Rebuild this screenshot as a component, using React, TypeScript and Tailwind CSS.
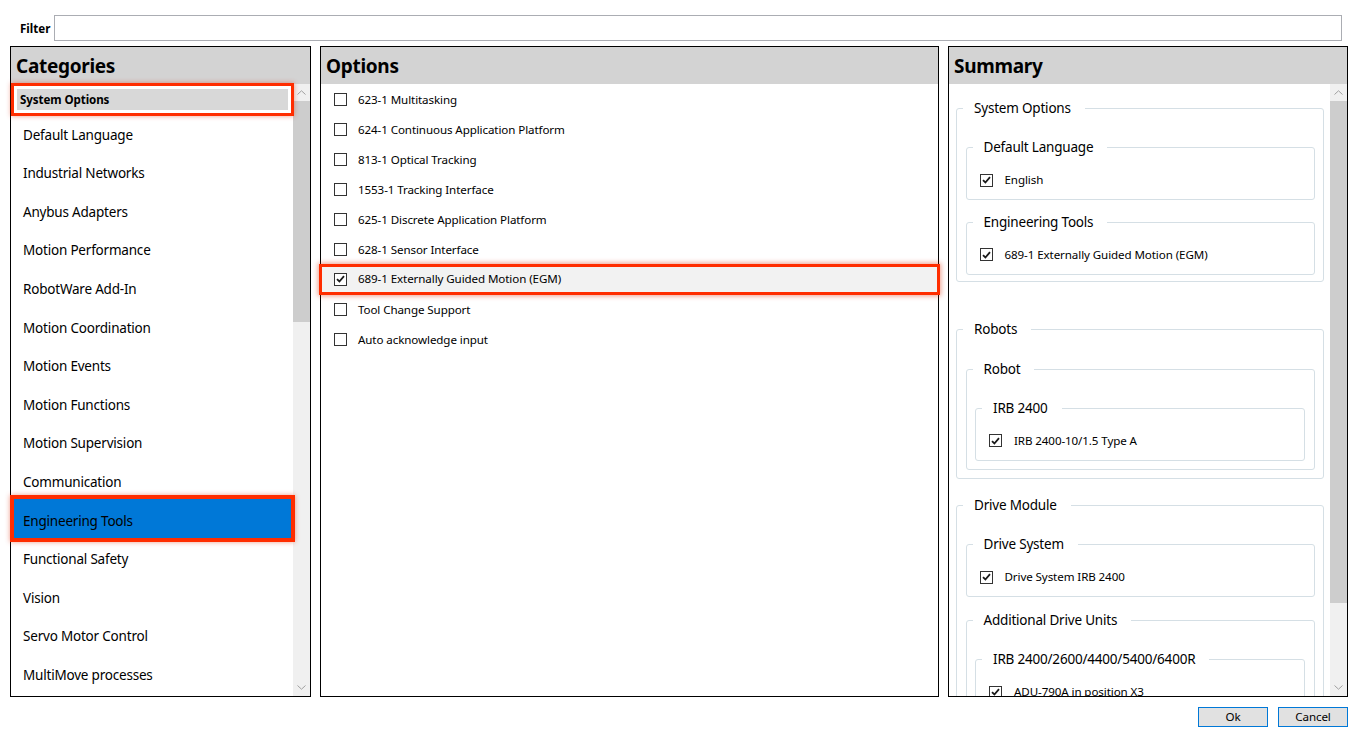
const categories = [
  "Default Language",
  "Industrial Networks",
  "Anybus Adapters",
  "Motion Performance",
  "RobotWare Add-In",
  "Motion Coordination",
  "Motion Events",
  "Motion Functions",
  "Motion Supervision",
  "Communication",
  "Engineering Tools",
  "Functional Safety",
  "Vision",
  "Servo Motor Control",
  "MultiMove processes",
];

const options = [
  { label: "623-1 Multitasking", on: false },
  { label: "624-1 Continuous Application Platform", on: false },
  { label: "813-1 Optical Tracking", on: false },
  { label: "1553-1 Tracking Interface", on: false },
  { label: "625-1 Discrete Application Platform", on: false },
  { label: "628-1 Sensor Interface", on: false },
  { label: "689-1 Externally Guided Motion (EGM)", on: true },
  { label: "Tool Change Support", on: false },
  { label: "Auto acknowledge input", on: false },
];

const redFrame =
  "relative shadow-[0_0_0_4px_#ff2d00,0_0_5px_4px_rgba(220,40,0,0.45)]";

// small / normal text, sized to the width of the original Segoe UI
const small = "text-[11.6px] tracking-[-0.1px]";
const normal = "text-[13.5px] tracking-[-0.2px]";

function Check({ on }: { on?: boolean }) {
  return (
    <span className="w-[13px] h-[13px] border border-[#333333] bg-white flex items-center justify-center shrink-0">
      {on && (
        <svg width="9" height="8" viewBox="0 0 9 8">
          <path d="M1 4.2 L3.4 6.5 L8 1.2" stroke="#1a1a1a" strokeWidth="1.8" fill="none" />
        </svg>
      )}
    </span>
  );
}

function ScrollBar({ thumb }: { thumb: number }) {
  return (
    <div className="w-[17px] bg-[#f0f0f0] flex flex-col shrink-0">
      <div className="h-[17px] flex items-center justify-center">
        <svg width="9" height="5" viewBox="0 0 9 5">
          <path d="M0.5 4.5 L4.5 0.8 L8.5 4.5" stroke="#a0a0a0" strokeWidth="1" fill="none" />
        </svg>
      </div>
      <div className="flex-1">
        <div className="bg-[#cdcdcd]" style={{ height: thumb }} />
      </div>
      <div className="h-[17px] flex items-center justify-center">
        <svg width="9" height="5" viewBox="0 0 9 5">
          <path d="M0.5 0.5 L4.5 4.2 L8.5 0.5" stroke="#a0a0a0" strokeWidth="1" fill="none" />
        </svg>
      </div>
    </div>
  );
}

function Header({ title }: { title: string }) {
  return (
    <div className="h-[37px] bg-[#d3d3d3] flex items-center pl-[5px] pt-[2px] text-[19px] tracking-[-0.3px] font-bold leading-none shrink-0">
      {title}
    </div>
  );
}

function Group({
  title,
  className = "",
  inner = "",
  children,
}: {
  title: string;
  className?: string;
  inner?: string;
  children: React.ReactNode;
}) {
  return (
    <fieldset className={"border border-[#d5dfe5] rounded-[3px] " + className}>
      <legend className={"ml-[6px] pl-[11px] pr-[14px] leading-[19px] " + normal}>{title}</legend>
      <div className={inner}>{children}</div>
    </fieldset>
  );
}

function Item({ label }: { label: string }) {
  return (
    <div className={"h-[20px] flex items-center gap-[12px] pl-[13px] pt-[13px] box-content " + small}>
      <Check on />
      <span>{label}</span>
    </div>
  );
}

export default function App() {
  return (
    <div className="w-[1358px] h-[737px] bg-white text-black font-['Noto_Sans',sans-serif] flex flex-col overflow-hidden">
      <div className="flex items-center mt-[15px] pl-[20px] pr-[16px]">
        <span className="w-[34px] pt-[1px] text-[11.6px] font-bold">Filter</span>
        <div className="flex-1 h-[26px] border border-[#abadb3]" />
      </div>

      <div className="flex gap-[9px] px-[10px] mt-[5px] h-[651px]">
        {/* Categories */}
        <div className="w-[301px] border border-black flex flex-col">
          <Header title="Categories" />
          <div className="flex-1 flex">
            <div className="flex-1">
              <div
                className={
                  "ml-[6px] mr-[5px] mt-[5px] mb-[3.5px] h-[21px] bg-[#d8d8d8] flex items-center pl-[3px] pt-[1px] font-bold relative shadow-[0_0_0_3px_white,0_0_0_6px_#ff2d00,0_0_5px_6px_rgba(220,40,0,0.45)] " +
                  small
                }
              >
                System Options
              </div>
              {categories.map((c) => (
                <div
                  key={c}
                  className={
                    "ml-[3px] mr-[2px] h-[38.6px] flex items-center pl-[9px] pt-[4px] " +
                    normal +
                    (c === "Engineering Tools" ? " bg-[#0078d7] " + redFrame : "")
                  }
                >
                  {c}
                </div>
              ))}
            </div>
            <ScrollBar thumb={221} />
          </div>
        </div>

        {/* Options */}
        <div className="w-[619px] border border-black flex flex-col">
          <Header title="Options" />
          <div className="flex-1 pt-[0.5px]">
            {options.map((o) =>
              o.on ? (
                <div
                  key={o.label}
                  className={
                    "relative -mx-[2px] -mt-[1px] h-[31px] flex items-center gap-[11px] pl-[15px] bg-[#f2f2f2] shadow-[inset_0_0_0_3px_#ff2d00,0_0_5px_1px_rgba(220,40,0,0.45)] " +
                    small
                  }
                >
                  <Check on />
                  <span>{o.label}</span>
                </div>
              ) : (
                <div key={o.label} className={"h-[30px] flex items-center gap-[11px] pl-[13px] " + small}>
                  <Check />
                  <span>{o.label}</span>
                </div>
              )
            )}
          </div>
        </div>

        {/* Summary */}
        <div className="w-[400px] border border-black flex flex-col">
          <Header title="Summary" />
          <div className="flex-1 flex min-h-0">
            <div className="flex-1 overflow-hidden pl-[7px] pr-[6px] pt-[14.5px]">
              <Group title="System Options" inner="px-[8.5px] pb-[6.5px]">
                <Group title="Default Language" className="mt-[20.5px]" inner="pb-[9px]">
                  <Item label="English" />
                </Group>
                <Group title="Engineering Tools" className="mt-[12.5px]" inner="pb-[9px]">
                  <Item label="689-1 Externally Guided Motion (EGM)" />
                </Group>
              </Group>

              <Group title="Robots" className="mt-[38px]" inner="px-[8.5px] pb-[8px]">
                <Group title="Robot" className="mt-[20.5px]" inner="px-[8.5px] pb-[8px]">
                  <Group title="IRB 2400" className="mt-[20px]" inner="pb-[9px]">
                    <Item label="IRB 2400-10/1.5 Type A" />
                  </Group>
                </Group>
              </Group>

              <Group title="Drive Module" className="mt-[17px]" inner="px-[8.5px] pb-[8px]">
                <Group title="Drive System" className="mt-[20.5px]" inner="pb-[9px]">
                  <Item label="Drive System IRB 2400" />
                </Group>
                <Group title="Additional Drive Units" className="mt-[13.5px]" inner="px-[8.5px] pb-[8px]">
                  <Group title="IRB 2400/2600/4400/5400/6400R" className="mt-[20.5px]" inner="pb-[9px]">
                    <Item label="ADU-790A in position X3" />
                  </Group>
                </Group>
              </Group>
            </div>
            <ScrollBar thumb={502} />
          </div>
        </div>
      </div>

      <div className="flex justify-end gap-[10px] pr-[10px] mt-[10px]">
        <button className={"w-[70px] h-[20px] border border-[#0078d7] bg-[#e1e1e1] leading-none " + small}>
          Ok
        </button>
        <button className={"w-[70px] h-[20px] border border-[#0078d7] bg-[#e1e1e1] leading-none " + small}>
          Cancel
        </button>
      </div>
    </div>
  );
}
